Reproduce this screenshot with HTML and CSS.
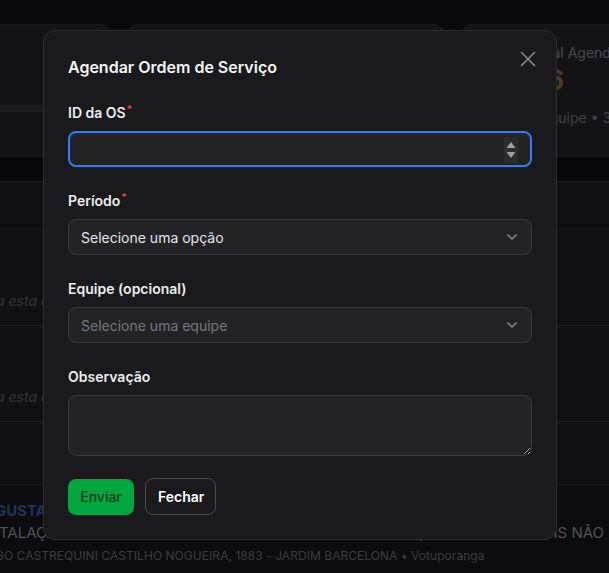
FILE: index.html
```html
<!DOCTYPE html>
<html lang="pt-br">
<head>
  <meta charset="UTF-8" />
  <meta name="viewport" content="width=device-width, initial-scale=1.0"/>
  <title>Agendar Ordem de Serviço</title>
  <link rel="stylesheet" href="styles.css">
</head>
<body>
  <!-- fundo da página (painel) -->
  <div class="pagina">
    <div class="cards">
      <div class="card card-equipes">
        <div class="card-titulo">Equipes</div>
        <div class="barra"></div>
      </div>
      <div class="card card-meio">
        <div class="card-titulo">Ordens do dia</div>
        <div class="card-numero">12</div>
      </div>
      <div class="card card-total">
        <div class="card-titulo">Carga Total Agendada</div>
        <div class="card-numero laranja">10/16</div>
        <div class="card-sub">Média / equipe • 3 serviços</div>
      </div>
    </div>

    <div class="faixa"></div>

    <div class="tabela">
      <div class="linha cabecalho"></div>
      <div class="linha alta">
        <span class="vazio">Nenhum agendamento para esta equipe</span>
      </div>
      <div class="linha alta">
        <span class="vazio">Nenhum agendamento para esta equipe</span>
      </div>
      <div class="linha baixa"></div>
      <div class="linha ordem">
        <div class="cliente">AUGUSTA MARIA DOS SANTOS</div>
        <div class="servico">
          <span>INSTALAÇÃO - FIBRA ÓPTICA</span>
          <span>CLIENTE AUSENTE, RETORNAR DEPOIS NÃO</span>
        </div>
        <div class="endereco">LARGO CASTREQUINI CASTILHO NOGUEIRA, 1883 - JARDIM BARCELONA • Votuporanga</div>
      </div>
    </div>
  </div>

  <!-- modal -->
  <div class="overlay">
    <div class="modal">
      <h2 class="modal-titulo">Agendar Ordem de Serviço</h2>
      <button class="fechar-x" type="button" aria-label="Fechar">
        <svg width="16" height="16" viewBox="0 0 16 16" fill="none" stroke="currentColor" stroke-width="1.5" stroke-linecap="round">
          <path d="M1.5 1.5l13 13M14.5 1.5l-13 13"/>
        </svg>
      </button>

      <form class="formulario">
        <div class="campo">
          <label for="os">ID da OS<span class="obrigatorio">*</span></label>
          <div class="controle">
            <input id="os" class="entrada foco" type="number">
            <span class="spinner">
              <svg width="14" height="26" viewBox="0 0 14 26">
                <path d="M7 5l4.5 6h-9z" fill="#9c9ca1"/>
                <path d="M7 21l4.5-6h-9z" fill="#9c9ca1"/>
              </svg>
            </span>
          </div>
        </div>

        <div class="campo">
          <label for="periodo">Período<span class="obrigatorio">*</span></label>
          <div class="controle">
            <select id="periodo" class="entrada">
              <option>Selecione uma opção</option>
              <option>Manhã</option>
              <option>Tarde</option>
            </select>
            <svg class="chevron" width="12" height="8" viewBox="0 0 12 8" fill="none" stroke="currentColor" stroke-width="1.5" stroke-linecap="round" stroke-linejoin="round">
              <path d="M2 2l4 4 4-4"/>
            </svg>
          </div>
        </div>

        <div class="campo">
          <label for="equipe">Equipe (opcional)</label>
          <div class="controle">
            <select id="equipe" class="entrada placeholder">
              <option>Selecione uma equipe</option>
            </select>
            <svg class="chevron" width="12" height="8" viewBox="0 0 12 8" fill="none" stroke="currentColor" stroke-width="1.5" stroke-linecap="round" stroke-linejoin="round">
              <path d="M2 2l4 4 4-4"/>
            </svg>
          </div>
        </div>

        <div class="campo">
          <label for="obs">Observação</label>
          <textarea id="obs" class="entrada area"></textarea>
        </div>

        <div class="botoes">
          <button type="button" class="botao enviar">Enviar</button>
          <button type="button" class="botao fechar">Fechar</button>
        </div>
      </form>
    </div>
  </div>
</body>
</html>
```
FILE: styles.css
```css
* {
  box-sizing: border-box;
}

html, body {
  margin: 0;
  padding: 0;
  height: 100%;
}

body {
  background-color: #111114;
  font-family: "Inter", "Noto Sans", sans-serif;
  color: #e4e4e7;
  color-scheme: dark;
  overflow: hidden;
}

/* ---------- fundo ---------- */

.pagina {
  height: 100%;
  overflow: hidden;
}

.cards {
  display: flex;
  gap: 18px;
  padding-top: 24px;
  margin-left: -150px;
}

.card {
  flex: none;
  height: 133px;
  background-color: #222226;
  border: 1px solid #2e2e33;
  border-radius: 10px;
  padding: 18px 20px;
  white-space: nowrap;
}

.card-equipes {
  width: 260px;
  display: flex;
  flex-direction: column;
}

.card-meio {
  width: 316px;
}

.card-total {
  width: 300px;
  padding-left: 25px;
}

.card-titulo {
  font-size: 14px;
  color: #7d7d84;
  line-height: 20px;
}

.card-numero {
  font-size: 28px;
  font-weight: 700;
  line-height: 34px;
  color: #7d7d84;
}

.card-numero.laranja {
  color: #7a664f;
  letter-spacing: 1px;
}

.card-sub {
  margin-top: 12px;
  font-size: 14px;
  color: #6f6f76;
}

.barra {
  margin-top: 42px;
  height: 7px;
  margin-left: -20px;
  margin-right: -20px;
  background-color: #303034;
}

.faixa {
  height: 24px;
  background-color: #0f0f12;
}

.tabela {
  background-color: #1d1d21;
}

.linha {
  border-top: 1px solid #2b2b30;
}

.cabecalho {
  height: 48px;
  background-color: #1a1a1e;
}

.alta {
  height: 96px;
  display: flex;
  align-items: flex-end;
  padding-bottom: 16px;
}

.vazio {
  font-size: 14px;
  font-style: italic;
  color: #5a5a60;
  margin-left: -182px;
  white-space: nowrap;
}

.baixa {
  height: 64px;
}

.ordem {
  height: 90px;
  background-color: #161619;
  padding-top: 14px;
  white-space: nowrap;
}

.cliente {
  font-size: 15px;
  font-weight: 700;
  color: #34589a;
  line-height: 22px;
  margin-left: -27px;
}

.servico {
  display: flex;
  justify-content: space-between;
  margin-left: -26px;
  width: 630px;
  font-size: 15px;
  color: #8a8a90;
  line-height: 22px;
}

.endereco {
  font-size: 12px;
  color: #66666c;
  line-height: 22px;
  margin-top: 1px;
  margin-left: -28px;
  letter-spacing: 0.05px;
}

/* ---------- modal ---------- */

.overlay {
  position: fixed;
  inset: 0;
  background-color: rgba(0, 0, 0, 0.42);
  display: flex;
  justify-content: center;
  align-items: center;
  padding-right: 9px;
  padding-bottom: 3px;
}

.modal {
  position: relative;
  width: 514px;
  background-color: #1a1a1c;
  border: 1px solid #2d2d31;
  border-radius: 12px;
  padding: 24px;
}

.modal-titulo {
  margin: 0;
  font-size: 16px;
  font-weight: 600;
  line-height: 24px;
  color: #f4f4f5;
}

.fechar-x {
  position: absolute;
  top: 20px;
  right: 20px;
  width: 16px;
  height: 16px;
  padding: 0;
  border: none;
  background: none;
  color: #8d8d93;
  cursor: pointer;
}

.formulario {
  display: flex;
  flex-direction: column;
  gap: 24px;
  margin-top: 24px;
}

.campo {
  display: flex;
  flex-direction: column;
  gap: 8px;
}

.campo label {
  font-size: 14px;
  font-weight: 600;
  line-height: 20px;
  color: #ececee;
}

.obrigatorio {
  color: #ef4444;
  font-size: 10px;
  vertical-align: top;
  line-height: 12px;
  margin-left: 1px;
}

.controle {
  position: relative;
}

.entrada {
  display: block;
  width: 100%;
  height: 36px;
  font-family: "Inter", "Noto Sans", sans-serif;
  font-size: 14px;
  color: #e4e4e7;
  background-color: #232326;
  border: 1px solid #38383d;
  border-radius: 8px;
  padding: 0 12px;
  outline: none;
  appearance: none;
  -webkit-appearance: none;
  -moz-appearance: textfield;
}

.entrada::-webkit-inner-spin-button,
.entrada::-webkit-outer-spin-button {
  -webkit-appearance: none;
  margin: 0;
}

.entrada.foco {
  border: 2px solid #2f7cf6;
}

.entrada.placeholder {
  color: #76767c;
}

.spinner {
  position: absolute;
  top: 6px;
  right: 14px;
  width: 14px;
  height: 26px;
  background-color: #2c2c2f;
}

.spinner svg {
  display: block;
}

.chevron {
  position: absolute;
  top: 14px;
  right: 14px;
  color: #8a8a90;
}

.area {
  height: 61px;
  padding: 8px 12px;
  resize: vertical;
}

.botoes {
  display: flex;
  gap: 11px;
  margin-top: -2px;
  align-items: center;
}

.botao {
  height: 36px;
  font-family: "Inter", "Noto Sans", sans-serif;
  font-size: 14px;
  border-radius: 8px;
  padding: 0 12px;
  cursor: pointer;
}

.botoes .enviar {
  background-color: #00a63e;
  color: #0a3a1d;
  border: none;
  font-weight: 500;
  width: 66px;
}

.botoes .fechar {
  height: 37px;
  background-color: transparent;
  color: #ffffff;
  border: 1px solid #4a4a4f;
  font-weight: 600;
  width: 71px;
}
```
